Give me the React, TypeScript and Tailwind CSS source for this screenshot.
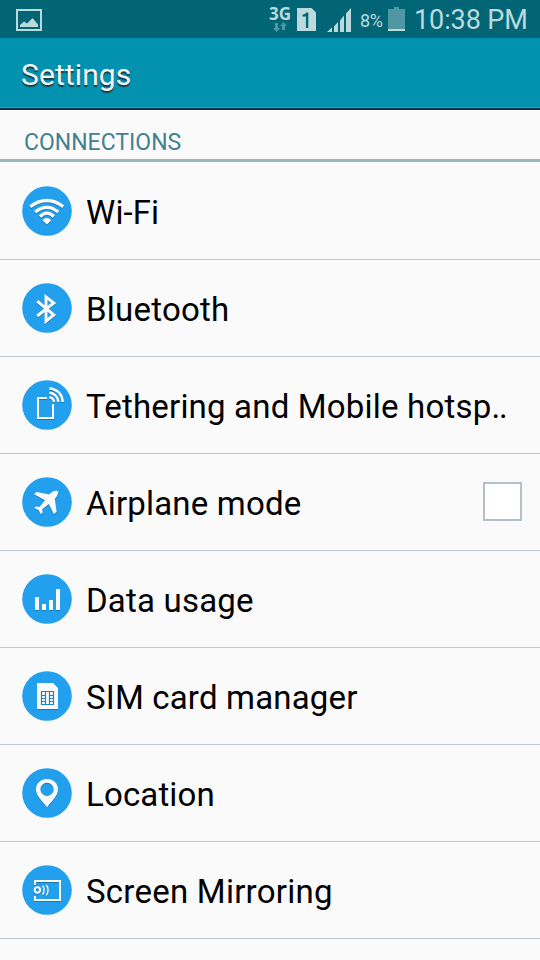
import React from 'react';

const WifiIcon = () => (
  <>
    <g fill="none" stroke="currentColor" strokeWidth="3.2">
      <path d="M8.2 20.6 Q25 8.4 41.2 20.6" />
      <path d="M13.2 26 Q25 16.6 36.3 26" />
      <path d="M18 30.5 Q25 23.8 31.8 30.5" />
    </g>
    <path d="M20.4 34.2 Q24.8 30 29.2 34.2 L24.8 38.6 Z" fill="currentColor" />
  </>
);

const BluetoothIcon = () => (
  <path
    d="M15.2 18.2 L31.8 32 L24 38.2 V14 L31.8 20 L15.2 33"
    fill="none"
    stroke="currentColor"
    strokeWidth="3"
  />
);

const TetheringIcon = () => (
  <g fill="none" stroke="currentColor" strokeWidth="2">
    <path d="M25 18 H16 V38 H31 V24" />
    <g strokeWidth="2.5">
      <path d="M27.3 17.2 A5 5 0 0 1 32 22" />
      <path d="M27.3 12.8 A9.3 9.3 0 0 1 36.3 22" />
      <path d="M27.3 8.4 A13.6 13.6 0 0 1 40.6 22" />
    </g>
  </g>
);

const AirplaneIcon = () => (
  <path
    d="M12 17.2 L14.6 15 L27.3 17.4 Q31 13.8 33.5 13.8 L36.2 14 Q36.6 18 32.8 22 L34.6 34.5 L32 37.3 L26.8 27 L20.2 32.2 L20.6 35.6 L18.7 37.3 L16.8 33.2 L12.3 31 L13.8 29.5 L17.6 30 L23 23.2 Z"
    fill="currentColor"
  />
);

const DataIcon = () => (
  <path d="M13 23h4v13h-4z M20 30h4v6h-4z M27 26h4v10h-4z M34 15h4v21h-4z" fill="currentColor" />
);

const SimIcon = () => (
  <>
    <path d="M15 12 H31 L36 17 V38 H15 Z" fill="currentColor" />
    <path
      d="M19.5 20.5 H31.5 V33.5 H19.5 Z M23.5 20 V34 M27.5 20 V34 M19 24.5 H24 M27 24.5 H32 M19 27.5 H24 M27 27.5 H32 M19 30.5 H24 M27 30.5 H32"
      fill="none"
      stroke="#1b84c4"
      strokeWidth="1.2"
    />
  </>
);

const LocationIcon = () => (
  <path
    fillRule="evenodd"
    d="M25 11 C31.3 11 36 15.6 36 21.5 C36 28 29.5 33 25 39.4 C20.5 33 14 28 14 21.5 C14 15.6 18.7 11 25 11 Z M25 14.8 A6.6 6.6 0 1 0 25 28 A6.6 6.6 0 1 0 25 14.8 Z"
    fill="currentColor"
  />
);

const MirroringIcon = () => (
  <g fill="none" stroke="currentColor" strokeWidth="2">
    <path d="M13 20 V16 H38 V35 H13 V31" />
    <circle cx="15.4" cy="25" r="2.7" />
    <g strokeWidth="1.4">
      <path d="M20.6 20.6 Q23.6 25 20.6 29.6" />
      <path d="M24.3 20 Q28 25 24.3 30.4" />
    </g>
  </g>
);

const items = [
  { label: 'Wi-Fi', icon: WifiIcon, tracking: 'tracking-[0.1px]' },
  { label: 'Bluetooth', icon: BluetoothIcon, tracking: 'tracking-[0.24px]' },
  { label: 'Tethering and Mobile hotsp', icon: TetheringIcon, tracking: 'tracking-[0.19px]', truncated: true },
  { label: 'Airplane mode', icon: AirplaneIcon, tracking: 'tracking-[0.18px]', checkbox: true },
  { label: 'Data usage', icon: DataIcon, tracking: 'tracking-[0.2px]' },
  { label: 'SIM card manager', icon: SimIcon, tracking: 'tracking-[0.18px]' },
  { label: 'Location', icon: LocationIcon, tracking: 'tracking-[0.15px]' },
  { label: 'Screen Mirroring', icon: MirroringIcon, tracking: 'tracking-[0.24px]' },
];

function StatusBar() {
  return (
    <div className="flex h-[38px] items-start bg-[#026575] text-[#bcd9de]">
      <svg className="ml-4 mt-[9px]" width="26" height="22" viewBox="0 0 26 22">
        <path d="M1 1 H25 V21 H1 Z" fill="none" stroke="currentColor" strokeWidth="2" />
        <path d="M4 18 V16 L8 12.5 L11 14.5 L16.5 9 L22 15.5 V18 Z" fill="currentColor" />
      </svg>

      <div className="ml-[227px] w-[23px] pt-1">
        <div className="h-[18px] font-['Open_Sans'] text-[17px] font-bold leading-[20px]">3G</div>
        <svg className="ml-1" width="15" height="10" viewBox="0 0 15 10" fill="#4f98a3">
          <path d="M2 1 H5 V6 H7.5 L3.5 10 L0 6 H2 Z" />
          <path d="M9 8 V4 H7 L10.5 0 L14 4 H12 V8 Z" />
        </svg>
      </div>

      <svg className="ml-[5px] mt-2" width="19" height="23" viewBox="0 0 19 23">
        <path d="M0 0 H14.5 L19 4.5 V23 H0 Z" fill="currentColor" />
        <path d="M5.5 8.5 V6.8 Q8.5 6.5 9.3 4.5 H11.3 V20 H8.9 V8.5 Z" fill="#026575" />
      </svg>

      <svg className="ml-[11px] mt-2" width="24" height="24" viewBox="0 0 24 24" fill="currentColor">
        <path d="M0 24 L5 19.5 V24 Z M7 18.5 L11 14 V24 H7 Z M13 12.5 L17 7.5 V24 H13 Z M19 5.5 L24 0 V24 H19 Z" />
      </svg>

      <span className="ml-[9px] mt-[11px] w-[28px] text-[18px] leading-[20px] tracking-[-0.3px]">8%</span>

      <svg className="mt-[7px]" width="17" height="24" viewBox="0 0 17 24">
        <path d="M6 0 H11 V2 H17 V24 H0 V2 H6 Z" fill="#4f98a3" />
        <path d="M0 22 H17 V24 H0 Z" fill="currentColor" />
      </svg>

      <span className="ml-[9px] mt-[4px] whitespace-nowrap text-[27px] leading-[32px] tracking-[-0.1px]">10:38 PM</span>
    </div>
  );
}

export default function App() {
  return (
    <div className="flex h-[960px] w-[540px] flex-col overflow-hidden bg-[#fafafa] font-['Roboto',sans-serif]">
      <StatusBar />

      <header className="flex h-[72px] items-center border-b-2 border-[#04374f] bg-[#0292af] pl-[21px] pb-px text-[30px] text-[#f5f5f5] shadow-[inset_0_-1px_0_#2aa3bb]">
        <h1 className="mt-[4px] tracking-[0.1px] [text-shadow:0_2px_1px_#1d3c45]">Settings</h1>
      </header>

      <div className="h-[52px] border-b-[3px] border-[#9eb7bd] pl-6 pt-[19px] text-[23px] leading-[28px] text-[#43808f]">
        CONNECTIONS
      </div>

      <ul className="pt-px">
        {items.map(({ label, icon: Icon, tracking, truncated, checkbox }) => (
          <li key={label} className="flex h-[97px] items-center border-b border-[#bfc7cf] pl-[22px] pr-[18px]">
            <svg className="-mt-px shrink-0 text-[#fafafa]" width="50" height="50" viewBox="0 0 50 50">
              <circle cx="25" cy="25" r="24.8" fill="#22a0ee" />
              <g className="[filter:drop-shadow(0_1px_0_#1879b5)]">
                <Icon />
              </g>
            </svg>
            <span
              className={`ml-[14px] mt-[4px] flex-1 whitespace-nowrap text-[33px] leading-[40px] text-black ${tracking}`}
            >
              {label}
              {truncated && <span className="tracking-[-1px]">..</span>}
            </span>
            {checkbox && <div className="mb-[2px] size-[39px] border-2 border-[#b2c1c4] bg-white" />}
          </li>
        ))}
      </ul>
    </div>
  );
}
